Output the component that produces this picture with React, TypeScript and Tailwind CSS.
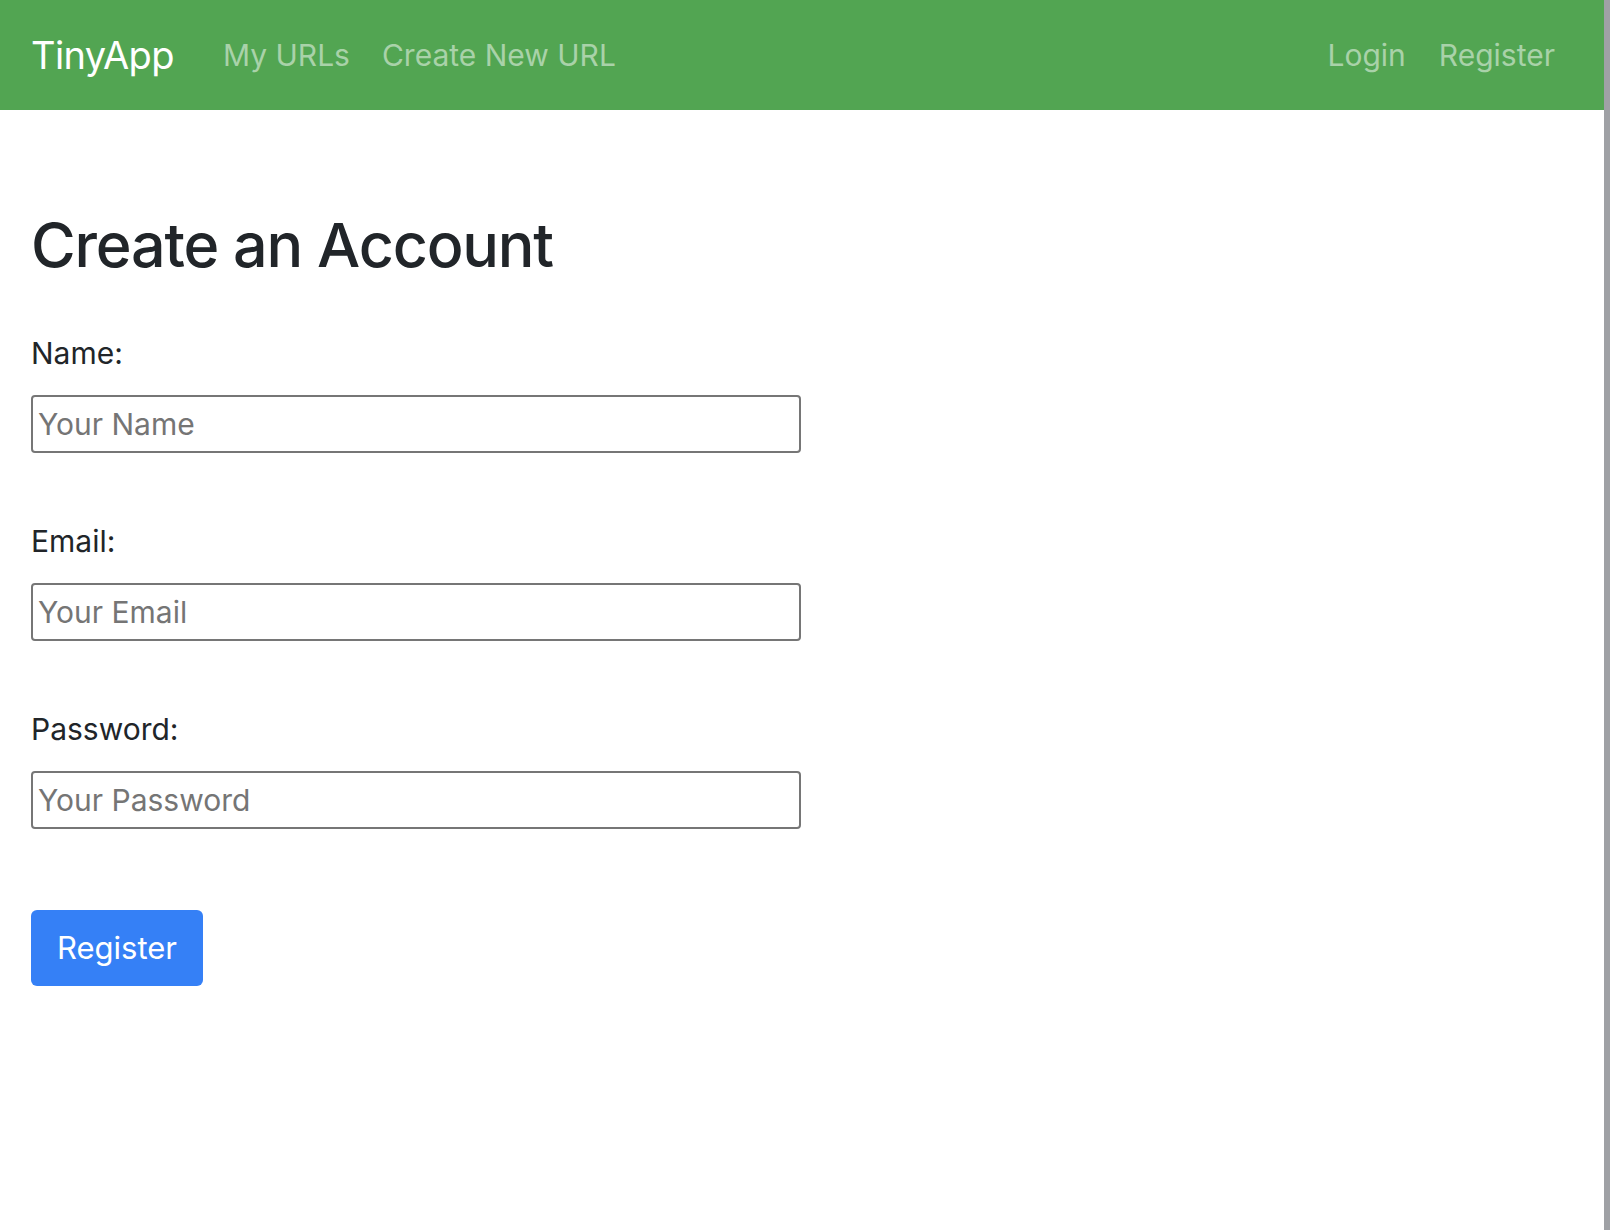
const FONT = "font-['Inter','Roboto','Liberation_Sans',sans-serif]"

function NavLink({ children }: { children: React.ReactNode }) {
  return (
    <a href="#" className="text-[30px] leading-none text-[#a9d2a9] hover:text-white">
      {children}
    </a>
  )
}

function Field({ label, placeholder, type = "text" }: { label: string; placeholder: string; type?: string }) {
  return (
    <div className="flex flex-col">
      <label className="text-[30px] leading-[45px] text-[#212529]">{label}</label>
      <input
        type={type}
        placeholder={placeholder}
        className="mt-[19px] h-[58px] w-[770px] rounded-[4px] border-2 border-[#767676] px-[5px] text-[30px] text-[#212529] placeholder:text-[#757575] outline-none"
      />
    </div>
  )
}

export default function App() {
  return (
    <div className={`${FONT} flex min-h-[1230px] w-full bg-white`}>
      <main className="flex-1">
        {/* ── Navbar ── */}
        <nav className="flex h-[110px] items-center bg-[#52a552] pl-[31px] pr-[49px]">
          <a href="#" className="text-[38px] leading-none tracking-[-0.6px] text-white">TinyApp</a>
          <div className="ml-[49px] flex items-center gap-[32px]">
            <NavLink>My URLs</NavLink>
            <NavLink>Create New URL</NavLink>
          </div>
          <div className="ml-auto flex items-center gap-[33px]">
            <NavLink>Login</NavLink>
            <NavLink>Register</NavLink>
          </div>
        </nav>

        {/* ── Form ── */}
        <section className="px-[31px] pt-[99px]">
          <h1 className="text-[61px] leading-[73px] font-medium tracking-[-1.2px] text-[#212529]">Create an Account</h1>
          <form className="mt-[49px] flex flex-col gap-[66px]">
            <Field label="Name:" placeholder="Your Name" />
            <Field label="Email:" placeholder="Your Email" type="email" />
            <Field label="Password:" placeholder="Your Password" type="password" />
          </form>
          <button
            type="button"
            className="mt-[81px] h-[76px] w-[172px] rounded-[6px] bg-[#3580f6] text-[31px] text-white"
          >
            Register
          </button>
        </section>
      </main>
      <div className="w-[6px] shrink-0 bg-[#9fa1a5]" />
    </div>
  )
}
